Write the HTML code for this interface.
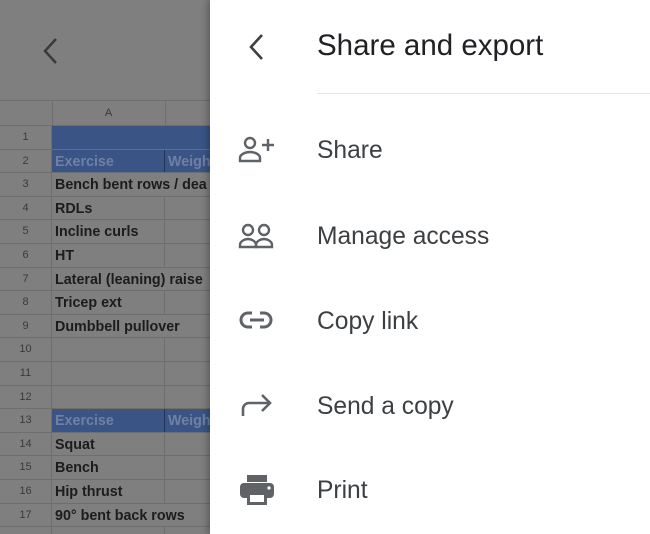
<!DOCTYPE html>
<html><head><style>
body{margin:0;width:650px;height:534px;overflow:hidden;position:relative;background:#fff;font-family:"Liberation Sans",Arial,sans-serif}
#sheet{position:absolute;left:0;top:0;width:210px;height:534px;background:#7f7f7f;overflow:hidden}
.r{position:absolute;left:0;width:210px;height:23.6px;border-bottom:1px solid #6e6e6e;box-sizing:border-box}
.n{position:absolute;left:0;width:52px;height:100%;text-align:center;font-size:11px;color:#3a3a3a;line-height:23px;border-right:1px solid #6e6e6e;box-sizing:border-box}
.a{position:absolute;left:52px;width:113px;height:100%;border-right:1px solid #6e6e6e;box-sizing:border-box;font-weight:bold;font-size:14.3px;color:#1c1c1c;line-height:24px;padding-left:3px;white-space:nowrap}
.b{position:absolute;left:165px;width:45px;height:100%;font-weight:bold;font-size:14.3px;color:#1c1c1c;line-height:24px;padding-left:3px;white-space:nowrap}
.blue .a,.blue .b{background:#3a5585;color:#7080a4;border-color:#1f3355}
.ov .a{overflow:visible;border-right:none}
#drawer{position:absolute;left:210px;top:0;width:440px;height:534px;background:#fff;box-shadow:-3px 0 6px rgba(0,0,0,.25)}
.t{position:absolute;left:107px;font-size:24.6px;color:#3c4043}
svg{position:absolute}
</style></head><body>
<div id="sheet">
<svg style="left:38px;top:36px" width="24" height="30" viewBox="0 0 24 30"><path d="M18 3 L7 15 L18 27" stroke="#3a3a3a" stroke-width="2.5" fill="none"/></svg>
<div style="position:absolute;top:100px;left:0;width:210px;height:26px;border-bottom:1px solid #6e6e6e;border-top:1px solid #6e6e6e;box-sizing:border-box">
<div style="position:absolute;left:0;width:52px;height:100%;border-right:1px solid #6e6e6e"></div>
<div style="position:absolute;left:52px;width:113px;height:100%;border-right:1px solid #6e6e6e;text-align:center;font-size:11px;color:#3a3a3a;line-height:24px">A</div></div>
<div class="r blue" style="top:126px"><div class="n">1</div><div class="a" style="border-right:none"></div><div class="b"></div></div>
<div class="r blue" style="top:149.6px"><div class="n">2</div><div class="a">Exercise</div><div class="b">Weigh</div></div>
<div class="r ov" style="top:173.2px"><div class="n">3</div><div class="a">Bench bent rows / dea</div></div>
<div class="r" style="top:196.8px"><div class="n">4</div><div class="a">RDLs</div></div>
<div class="r" style="top:220.4px"><div class="n">5</div><div class="a">Incline curls</div></div>
<div class="r" style="top:244px"><div class="n">6</div><div class="a">HT</div></div>
<div class="r ov" style="top:267.6px"><div class="n">7</div><div class="a">Lateral (leaning) raise</div></div>
<div class="r" style="top:291.2px"><div class="n">8</div><div class="a">Tricep ext</div></div>
<div class="r ov" style="top:314.8px"><div class="n">9</div><div class="a">Dumbbell pullover</div></div>
<div class="r" style="top:338.4px"><div class="n">10</div><div class="a"></div></div>
<div class="r" style="top:362px"><div class="n">11</div><div class="a"></div></div>
<div class="r" style="top:385.6px"><div class="n">12</div><div class="a"></div></div>
<div class="r blue" style="top:409.2px"><div class="n">13</div><div class="a">Exercise</div><div class="b">Weigh</div></div>
<div class="r" style="top:432.8px"><div class="n">14</div><div class="a">Squat</div></div>
<div class="r" style="top:456.4px"><div class="n">15</div><div class="a">Bench</div></div>
<div class="r" style="top:480px"><div class="n">16</div><div class="a">Hip thrust</div></div>
<div class="r ov" style="top:503.6px"><div class="n">17</div><div class="a">90° bent back rows</div></div>
<div class="r" style="top:527.2px"><div class="n"></div><div class="a"></div></div>
</div>
<div id="drawer">
<svg style="left:36px;top:32px" width="20" height="30" viewBox="0 0 20 30"><path d="M16 3 L5 15 L16 27" stroke="#3c4043" stroke-width="2.6" fill="none"/></svg>
<div class="t" style="top:29px;font-size:29.5px;color:#202124">Share and export</div>
<div style="position:absolute;left:107px;top:93px;width:333px;height:1px;background:#e4e4e4"></div>
<svg style="left:28px;top:135px" width="40" height="30" viewBox="0 0 40 30" fill="none" stroke="#5f6368" stroke-width="2.4"><circle cx="12" cy="8" r="5"/><path d="M2 26 v-3 c0-4 6-6 10-6 s10 2 10 6 v3 z"/><path d="M30 4 v12 M24 10 h12"/></svg>
<div class="t" style="top:137px">Share</div>
<svg style="left:28px;top:222px" width="40" height="30" viewBox="0 0 40 30" fill="none" stroke="#5f6368" stroke-width="2.4"><circle cx="10" cy="8" r="5"/><circle cx="26" cy="8" r="5"/><path d="M2 25 v-2 c0-4 5-6 8-6 s8 2 8 6 v2 z"/><path d="M18 25 v-2 c0-4 5-6 8-6 s8 2 8 6 v2 z"/></svg>
<div class="t" style="top:223px">Manage access</div>
<svg style="left:28px;top:309px" width="40" height="24" viewBox="0 0 40 24" fill="none" stroke="#5f6368" stroke-width="3"><path d="M14 4 h-4 a7 7 0 0 0 0 14 h4"/><path d="M22 4 h4 a7 7 0 0 1 0 14 h-4"/><path d="M12 11 h14"/></svg>
<div class="t" style="top:308px">Copy link</div>
<svg style="left:28px;top:390px" width="40" height="30" viewBox="0 0 40 30" fill="none" stroke="#5f6368" stroke-width="2.6"><path d="M5 26 v-7 a6 6 0 0 1 6-6 h20"/><path d="M24 5 l8 8 l-8 8"/></svg>
<div class="t" style="top:393px">Send a copy</div>
<svg style="left:28px;top:473px" width="40" height="34" viewBox="0 0 40 34" fill="#5f6368"><rect x="9" y="2" width="20" height="7"/><rect x="2" y="10" width="34" height="15" rx="4"/><rect x="9" y="20" width="20" height="12"/><rect x="12" y="22" width="14" height="7" fill="#fff"/><circle cx="31" cy="15" r="1.6" fill="#fff"/></svg>
<div class="t" style="top:477px">Print</div>
</div>
</body></html>
